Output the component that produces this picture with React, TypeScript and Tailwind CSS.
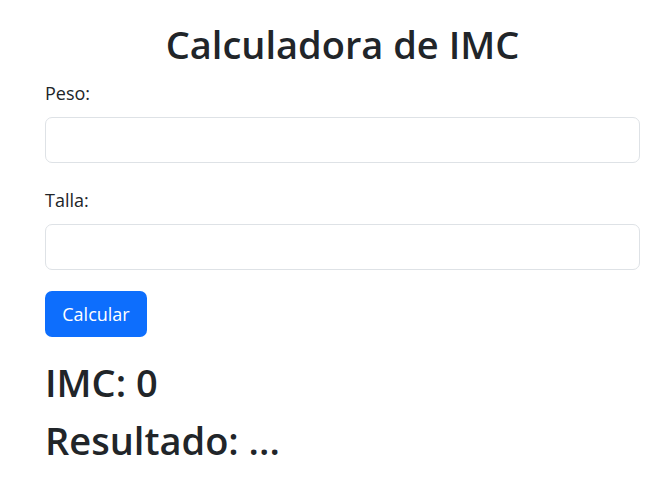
export default function App() {
  return (
    <div className="min-h-screen bg-white pl-[45px] pr-[12px] text-[#212529] font-['Open_Sans',sans-serif]">
      <h1 className="pt-[21px] text-center text-[38px] font-semibold leading-[46px]">
        Calculadora de IMC
      </h1>
      <form className="mt-[12px]" onSubmit={(e) => e.preventDefault()}>
        <div className="mb-[23px]">
          <label className="mb-[10px] block text-[18px] leading-[28px]">Peso:</label>
          <input
            type="text"
            className="block h-[46px] w-full rounded-[7px] border border-[#dee2e6] px-3 outline-none"
          />
        </div>
        <div className="mb-[21px]">
          <label className="mb-[10px] block text-[18px] leading-[28px]">Talla:</label>
          <input
            type="text"
            className="block h-[46px] w-full rounded-[7px] border border-[#dee2e6] px-3 outline-none"
          />
        </div>
        <button
          type="submit"
          className="h-[46px] w-[102px] rounded-[7px] bg-[#0d6efd] text-[18px] text-white"
        >
          Calcular
        </button>
      </form>
      <h2 className="mt-[22px] text-[38px] font-semibold leading-[46px]">IMC: 0</h2>
      <h2 className="mt-[12px] text-[38px] font-semibold leading-[46px]">Resultado: ...</h2>
    </div>
  );
}
